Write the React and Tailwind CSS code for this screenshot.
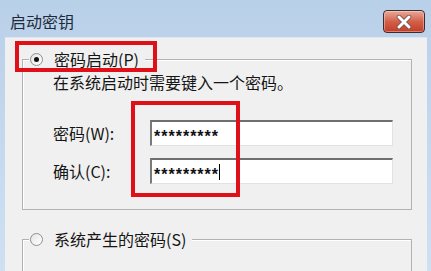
import React from "react";

const font = { fontFamily: '"Noto Sans CJK SC", "Noto Sans", sans-serif' };

function Radio({ checked, disabled }) {
  return (
    <span
      className={`relative flex h-[13px] w-[13px] shrink-0 items-center justify-center rounded-full border ${
        disabled ? "border-[#c4c4c4] bg-[#f4f4f4]" : "border-[#8e8f8f] bg-gradient-to-br from-[#e4e4e4] to-white"
      }`}
    >
      {checked && <span className="h-[5px] w-[5px] rounded-full bg-[#111]" />}
    </span>
  );
}

function Field({ label, value, caret }) {
  return (
    <div className="flex items-center">
      <span className="w-[97px] text-[16px] leading-5 text-[#151515]">{label}</span>
      <div className="flex h-[26px] w-[243px] items-center border-t-2 border-l-2 border-r border-b border-t-[#6f6f6f] border-l-[#7a7a7a] border-r-[#e2e2e2] border-b-[#e2e2e2] bg-white pl-[2px]">
        <span
          className="pt-[7px] text-[16px] font-bold leading-none tracking-[1px] text-[#111]"
          style={{ fontFamily: '"Liberation Sans", Arial, sans-serif' }}
        >
          {value}
        </span>
        {caret && <span className="h-[16px] w-[1px] bg-black" />}
      </div>
    </div>
  );
}

export default function App() {
  return (
    <div
      className="relative flex h-[271px] w-[431px] flex-col overflow-hidden bg-gradient-to-b from-[#b9d0e9] to-[#cfe0f3]"
      style={font}
    >
      {/* title bar */}
      <div className="flex h-[37px] shrink-0 items-start justify-between pl-[10px] pr-[6px]">
        <span className="mt-[11px] text-[16px] leading-5 text-[#1e2a3a]">启动密钥</span>
        <button className="mt-[10px] flex h-[23px] w-[42px] items-center justify-center rounded-[4px] border border-[#3d2b2b] bg-gradient-to-b from-[#e9a898] via-[#d2604a] to-[#c43c25] shadow-[inset_0_0_0_1px_rgba(255,255,255,0.35)]">
          <svg width="16" height="14" viewBox="0 0 16 14">
            <path d="M3 2 L13 12 M13 2 L3 12" stroke="#6b4a44" strokeWidth="4.5" strokeLinecap="round" />
            <path d="M3 2 L13 12 M13 2 L3 12" stroke="#ffffff" strokeWidth="3" strokeLinecap="round" />
          </svg>
        </button>
      </div>

      {/* client area */}
      <div className="ml-[5px] mr-[4px] flex-1 border-t border-[#dfe6ee] bg-[#f0f0f0] pl-[17px] pr-[15px]">
        {/* group 1 */}
        <div className="relative mt-[21px] border border-[#b2b2b2] pl-[30px] pt-[12px] pb-[25px] shadow-[inset_1px_1px_0_#fff]">
          <div className="absolute left-[6px] top-[-11px] flex h-[20px] items-center bg-[#f0f0f0] pl-[1px] pr-[6px]">
            <Radio checked />
            <span className="ml-[11px] text-[16px] leading-5 text-[#151515]">密码启动(P)</span>
          </div>
          <p className="text-[16px] leading-5 text-[#151515]">在系统启动时需要键入一个密码。</p>
          <div className="mt-[28px] flex flex-col gap-[12px]">
            <Field label="密码(W):" value="*********" />
            <Field label="确认(C):" value="*********" caret />
          </div>
        </div>

        {/* group 2 */}
        <div className="relative mt-[29px] border border-[#b2b2b2] pl-[34px] pt-[28px] shadow-[inset_1px_1px_0_#fff]">
          <div className="absolute left-[6px] top-[-11px] flex h-[20px] items-center bg-[#f0f0f0] pl-[1px] pr-[6px]">
            <Radio />
            <span className="ml-[11px] text-[16px] leading-5 text-[#151515]">系统产生的密码(S)</span>
          </div>
          <div className="flex items-center gap-[8px] text-[#9a9a9a]">
            <Radio disabled />
            <span className="text-[16px] leading-5">在软盘上保存启动密钥(F)</span>
          </div>
        </div>
      </div>

      {/* annotation boxes */}
      <div className="absolute left-[15px] top-[41px] h-[31px] w-[142px] border-[4px] border-[#e01018]" />
      <div className="absolute left-[131px] top-[101px] h-[96px] w-[109px] border-[4px] border-[#e01018]" />
    </div>
  );
}
